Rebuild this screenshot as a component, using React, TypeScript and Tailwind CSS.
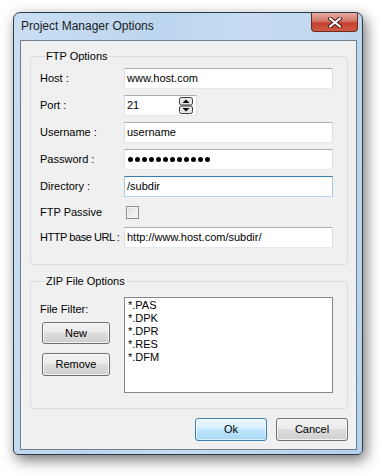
const font = "font-['Liberation_Sans',Arial,sans-serif]";

function TextBox({ value, focused }: { value?: string; focused?: boolean }) {
  return (
    <div
      className={
        "h-[21px] w-[209px] border bg-white px-[2px] flex items-center text-[11px] text-black " +
        (focused
          ? "border-[#a4c9e3] border-t-[#3d7bad] border-b-[#b7d9ed]"
          : "border-[#dbdfe6] border-t-[#abadb3] border-b-[#e3e9ef]")
      }
    >
      {value}
    </div>
  );
}

function Spinner() {
  return (
    <svg width="14" height="17" viewBox="0 0 14 17">
      <rect x="0.5" y="0.5" width="13" height="7.5" rx="2" fill="#e8e8e8" stroke="#3a3a3a" />
      <rect x="0.5" y="9" width="13" height="7.5" rx="2" fill="#e8e8e8" stroke="#3a3a3a" />
      <path d="M3.5 6 L7 2.5 L10.5 6 Z" fill="#000" />
      <path d="M3.5 11 L7 14.5 L10.5 11 Z" fill="#000" />
    </svg>
  );
}

function Row({ label, children, h = "h-[21px]", tight }: { label: string; children: React.ReactNode; h?: string; tight?: boolean }) {
  return (
    <div className={"flex items-center " + h}>
      <div className={"w-[84px] shrink-0 whitespace-nowrap text-[11px] text-black " + (tight ? "tracking-[-0.45px]" : "")}>{label}</div>
      {children}
    </div>
  );
}

function Button({ label, primary, w = "w-[72px]", h = "h-[23px]" }: { label: string; primary?: boolean; w?: string; h?: string }) {
  return (
    <button
      className={
        w + " " + h + " rounded-[3px] border text-[11px] text-black flex items-center justify-center " +
        (primary
          ? "border-[#3c7fb1] bg-[linear-gradient(#eaf6fd_0%,#d9f0fc_45%,#bee6fd_50%,#a7d9f5_100%)] shadow-[inset_0_0_0_1px_rgba(255,255,255,0.6)]"
          : "border-[#707070] bg-[linear-gradient(#f2f2f2_0%,#ebebeb_45%,#dddddd_50%,#cfcfcf_100%)] shadow-[inset_0_0_0_1px_rgba(255,255,255,0.7)]")
      }
    >
      {label}
    </button>
  );
}

export default function App() {
  return (
    <div className={"min-h-[476px] bg-white pl-[13px] pt-[12px] " + font}>
      <div className="w-[350px] h-[443px] rounded-t-[7px] rounded-b-[5px] border border-[#2f3a46] bg-[linear-gradient(100deg,#c9def3_0%,#bcd5ee_35%,#c7dcf2_55%,#b7d0ea_100%)] shadow-[3px_5px_14px_rgba(0,0,0,0.55)] flex flex-col">
        <div className="h-[27px] flex items-start justify-between">
          <div className="pl-[7px] pt-[6px] text-[12px] leading-[15px] text-[#1b1b1b]">Project Manager Options</div>
          <div className="mr-[4px] w-[47px] h-[19px] rounded-b-[4px] border border-t-0 border-[#6e2a22] bg-[linear-gradient(#e6a99f_0%,#d3776a_45%,#c2402f_55%,#cf5a43_100%)] flex items-center justify-center">
            <svg width="14" height="11" viewBox="0 0 14 11">
              <path d="M2 1.5 L12 9.5 M12 1.5 L2 9.5" stroke="#4a1510" strokeWidth="4" strokeLinecap="round" />
              <path d="M2 1.5 L12 9.5 M12 1.5 L2 9.5" stroke="#ffffff" strokeWidth="2.2" strokeLinecap="round" />
            </svg>
          </div>
        </div>
        <div className="ml-[6px] w-[337px] h-[410px] border border-[#6f7f8f] bg-[#f0f0f0] px-[9px] pt-[9px]">
          <fieldset className="w-[318px] border border-[#d5dfe5] rounded-[3px] pl-[9px] pb-[16px]">
            <legend className="ml-[5px] px-[1px] text-[11px] leading-[13px] text-black">FTP Options</legend>
            <div className="flex flex-col gap-[6px] pt-[5px]">
              <Row label="Host :">
                <TextBox value="www.host.com" />
              </Row>
              <Row label="Port :">
                <div className="h-[21px] w-[73px] border border-[#dbdfe6] border-t-[#abadb3] border-b-[#e3e9ef] bg-white pl-[2px] pr-[3px] flex items-center justify-between text-[11px]">
                  <span>21</span>
                  <Spinner />
                </div>
              </Row>
              <Row label="Username :">
                <TextBox value="username" />
              </Row>
              <Row label="Password :">
                <div className="h-[21px] w-[209px] border border-[#dbdfe6] border-t-[#abadb3] border-b-[#e3e9ef] bg-white pl-[3px] flex items-center gap-[2px]">
                  {Array.from({ length: 12 }).map((_, i) => (
                    <span key={i} className="w-[5px] h-[5px] rounded-full bg-black" />
                  ))}
                </div>
              </Row>
              <Row label="Directory :">
                <TextBox value="/subdir" focused />
              </Row>
              <Row label="FTP Passive" h="h-[18px]">
                <div className="ml-[2px] w-[13px] h-[13px] border border-[#8f8f8f] bg-[linear-gradient(135deg,#dcdcdc,#fbfbfb)] shadow-[inset_0_0_0_1px_#f4f4f4]" />
              </Row>
              <Row label="HTTP base URL :" tight>
                <TextBox value="http://www.host.com/subdir/" />
              </Row>
            </div>
          </fieldset>
          <fieldset className="mt-[10px] w-[318px] border border-[#d5dfe5] rounded-[3px] pl-[9px] pb-[15px]">
            <legend className="ml-[5px] px-[1px] text-[11px] leading-[13px] text-black">ZIP File Options</legend>
            <div className="flex pt-[9px]">
              <div className="w-[84px] flex flex-col">
                <div className="mt-[6px] text-[11px] leading-[13px] text-black">File Filter:</div>
                <div className="ml-[2px] mt-[6px] flex flex-col gap-[9px]">
                  <Button label="New" w="w-[68px]" h="h-[22px]" />
                  <Button label="Remove" w="w-[68px]" h="h-[23px]" />
                </div>
              </div>
              <div className="w-[209px] h-[96px] border border-[#828790] bg-white pl-[3px] pt-[1px] text-[11px] leading-[13px] text-black">
                <div>*.PAS</div>
                <div>*.DPK</div>
                <div>*.DPR</div>
                <div>*.RES</div>
                <div>*.DFM</div>
              </div>
            </div>
          </fieldset>
          <div className="w-[318px] mt-[9px] flex justify-end gap-[9px]">
            <Button label="Ok" primary />
            <Button label="Cancel" />
          </div>
        </div>
      </div>
    </div>
  );
}
